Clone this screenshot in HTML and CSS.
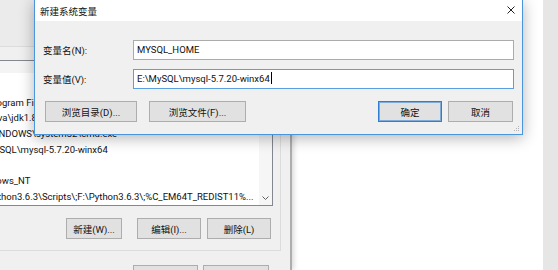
FILE: index.html
```html
<!DOCTYPE html>
<html lang="zh-CN">
<head>
    <meta charset="UTF-8">
    <meta name="viewport" content="width=device-width, initial-scale=1.0">
    <title>新建系统变量</title>
    <link rel="stylesheet" href="styles.css">
</head>
<body>
    <div class="desk">
        <!-- environment variables window behind the dialog -->
        <div class="env-window">
            <div class="env-top"></div>
            <div class="group">
                <div class="list">
                    <div class="list-body">
                        <div class="list-head"></div>
                        <div class="rows">
                            <div class="row">1</div>
                            <div class="row">C:\Program Files (x86)\Common Files\Oracle\Java\javapath</div>
                            <div class="row">C:\Java\jdk1.8.0_151</div>
                            <div class="row">C:\WINDOWS\system32\cmd.exe</div>
                            <div class="row">E:\MySQL\mysql-5.7.20-winx64</div>
                            <div class="row">4</div>
                            <div class="row">Windows_NT</div>
                            <div class="row">C:\Python3.6.3\Scripts\;F:\Python3.6.3\;%C_EM64T_REDIST11%...</div>
                        </div>
                    </div>
                    <div class="scrollbar">
                        <svg class="chev" width="7" height="4" viewBox="0 0 7 4"><polyline points="0.5,0.5 3.5,3.5 6.5,0.5" fill="none" stroke="#606060" stroke-width="1"/></svg>
                    </div>
                </div>
                <div class="list-actions">
                    <button class="btn btn-new">新建(W)...</button>
                    <button class="btn btn-edit">编辑(I)...</button>
                    <button class="btn btn-del">删除(L)</button>
                </div>
            </div>
            <div class="window-actions">
                <button class="btn btn-ok2">确定</button>
                <button class="btn btn-cancel2">取消</button>
            </div>
        </div>
        <div class="gap"></div>
        <div class="next-window"></div>

        <!-- the new variable dialog -->
        <div class="dialog">
            <div class="titlebar">
                <span class="title">新建系统变量</span>
                <svg class="close" width="8" height="8" viewBox="0 0 8 8"><path d="M0.5 0.5 L7.5 7.5 M7.5 0.5 L0.5 7.5" stroke="#222" stroke-width="1"/></svg>
            </div>
            <div class="form">
                <label class="label">变量名(N):</label>
                <div class="input">MYSQL_HOME</div>
                <label class="label">变量值(V):</label>
                <div class="input focused">E:\MySQL\mysql-5.7.20-winx64<span class="caret"></span></div>
                <div class="dialog-actions">
                    <button class="btn btn-dir">浏览目录(D)...</button>
                    <button class="btn btn-file">浏览文件(F)...</button>
                    <span class="spacer"></span>
                    <button class="btn btn-ok default">确定</button>
                    <button class="btn btn-cancel">取消</button>
                </div>
            </div>
            <svg class="grip" width="6" height="6" viewBox="0 0 6 6">
                <rect x="4" y="0" width="1" height="1" fill="#b5b5b5"/>
                <rect x="2" y="2" width="1" height="1" fill="#b5b5b5"/>
                <rect x="4" y="2" width="1" height="1" fill="#b5b5b5"/>
                <rect x="0" y="4" width="1" height="1" fill="#b5b5b5"/>
                <rect x="2" y="4" width="1" height="1" fill="#b5b5b5"/>
                <rect x="4" y="4" width="1" height="1" fill="#b5b5b5"/>
            </svg>
        </div>
    </div>
</body>
</html>
```

FILE: styles.css
```css
*{
    margin: 0;
    padding: 0;
    box-sizing: border-box;
}
body{
    width: 558px;
    height: 270px;
    overflow: hidden;
    background-color: #fff;
    font-family: Roboto, "Noto Sans CJK SC", sans-serif;
    font-size: 9.5px;
    color: #111;
}
.desk{
    position: relative;
    display: flex;
    height: 270px;
}

/* window behind */
.env-window{
    width: 292px;
    flex: none;
    display: flex;
    flex-direction: column;
    background-color: #f0f0f0;
    border-right: 2px solid #adadad;
    box-shadow: 2px 0 5px rgba(0,0,0,0.15);
    overflow: hidden;
}
.env-window > *{
    flex: none;
}
.env-top{
    height: 46px;
    background-color: #ebebeb;
}
.group{
    margin: 0 9px 0 -40px;
    border: 1px solid #dcdcdc;
    padding: 13px 7px 11px 10px;
}
.list{
    display: flex;
    height: 146px;
    border: 1px solid #828790;
    background-color: #fff;
}
.list-body{
    flex: 1;
    min-width: 0;
    overflow: hidden;
}
.list-head{
    height: 12px;
    background-color: #f4f4f4;
}
.rows{
    padding-top: 6px;
}
.row{
    height: 15.7px;
    line-height: 15.7px;
    padding-left: 3px;
    white-space: nowrap;
    color: #111;
}
.scrollbar{
    width: 13px;
    background-color: #f6f6f6;
    display: flex;
    align-items: flex-end;
    justify-content: center;
    padding-bottom: 5px;
}
.list-actions{
    display: flex;
    justify-content: flex-end;
    margin-top: 12px;
    padding-right: 2px;
}
.window-actions{
    display: flex;
    gap: 5px;
    margin-top: 14px;
    padding-left: 133px;
}
.btn{
    height: 21px;
    border: 1px solid #adadad;
    background-color: #e1e1e1;
    font-family: Roboto, "Noto Sans CJK SC", sans-serif;
    font-size: 9.5px;
    color: #111;
    text-align: center;
}
.btn-new{ width: 56px; }
.btn-edit{ width: 64px; margin-left: 15px; }
.btn-del{ width: 64px; margin-left: 6px; }
.btn-ok2{ width: 65px; }
.btn-cancel2{ width: 66px; }

.gap{
    flex: 1;
}
.next-window{
    width: 15px;
    flex: none;
    background-color: #e6e6e6;
}

/* dialog */
.dialog{
    position: absolute;
    left: 34px;
    top: -1px;
    width: 489px;
    height: 136px;
    border: 1px solid #4a95dc;
    background-color: #f0f0f0;
    box-shadow: 0 3px 14px rgba(0,0,0,0.3);
}
.titlebar{
    height: 21px;
    background-color: #fff;
    display: flex;
    align-items: center;
    justify-content: space-between;
    padding: 1px 7px 0 5px;
}
.title{
    font-size: 9.5px;
    color: #111;
}
.close{
    margin-top: -2px;
}
.form{
    display: grid;
    grid-template-columns: 90px 1fr;
    row-gap: 9px;
    align-items: center;
    padding: 19px 8px 0 8px;
}
.input{
    height: 20px;
    line-height: 18px;
    border: 1px solid #ababab;
    background-color: #fff;
    padding-left: 3px;
    white-space: nowrap;
}
.input.focused{
    border-color: #5a9fe0;
}
.caret{
    display: inline-block;
    width: 1px;
    height: 12px;
    margin-left: 1px;
    background-color: #000;
    vertical-align: -2px;
}
.dialog-actions{
    grid-column: 1 / -1;
    display: flex;
    margin-top: 3px;
    padding: 0 1px 0 2px;
}
.btn-dir{ width: 92px; }
.btn-file{ width: 97px; margin-left: 12px; }
.spacer{ flex: 1; }
.btn-ok{ width: 64px; }
.btn-cancel{ width: 65px; margin-left: 6px; }
.default{
    border-color: #2e7fd3;
    box-shadow: inset 0 0 0 1px rgba(46,127,211,0.55);
}
.grip{
    position: absolute;
    right: 2px;
    bottom: 2px;
}
```
